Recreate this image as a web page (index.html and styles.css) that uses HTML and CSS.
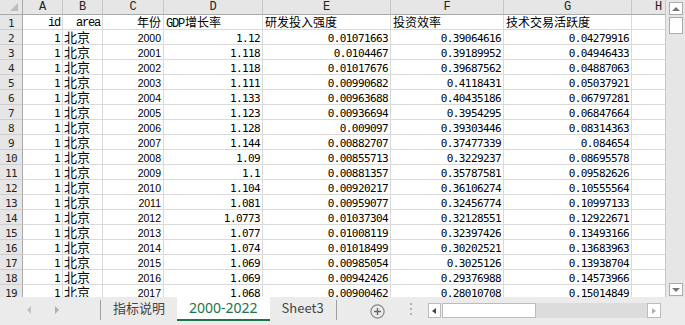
FILE: index.html
```html
<!DOCTYPE html>
<html>
<head>
    <meta charset="utf-8">
    <title>2000-2022</title>
    <link rel="stylesheet" href="styles.css">
</head>
<body>
    <div class="book">
        <div class="main">
            <div class="grid">
                <div class="row head">
                    <div class="corner"><span class="tri"></span></div>
                    <div>A</div>
                    <div>B</div>
                    <div>C</div>
                    <div>D</div>
                    <div>E</div>
                    <div>F</div>
                    <div>G</div>
                    <div>H</div>
                </div>
                <div class="row">
                    <div class="rh">1</div>
                    <div class="r lat">id</div>
                    <div class="r lat">area</div>
                    <div class="r cjk">年份</div>
                    <div class="lat">GDP<span class="cjk-in">增长率</span></div>
                    <div class="cjk">研发投入强度</div>
                    <div class="cjk">投资效率</div>
                    <div class="cjk">技术交易活跃度</div>
                    <div></div>
                </div>
                <div class="row">
                    <div class="rh">2</div>
                    <div class="r">1</div>
                    <div class="city">北京</div>
                    <div class="r year">2000</div>
                    <div class="r">1.12</div>
                    <div class="r">0.01071663</div>
                    <div class="r">0.39064616</div>
                    <div class="r">0.04279916</div>
                    <div></div>
                </div>
                <div class="row">
                    <div class="rh">3</div>
                    <div class="r">1</div>
                    <div class="city">北京</div>
                    <div class="r year">2001</div>
                    <div class="r">1.118</div>
                    <div class="r">0.0104467</div>
                    <div class="r">0.39189952</div>
                    <div class="r">0.04946433</div>
                    <div></div>
                </div>
                <div class="row">
                    <div class="rh">4</div>
                    <div class="r">1</div>
                    <div class="city">北京</div>
                    <div class="r year">2002</div>
                    <div class="r">1.118</div>
                    <div class="r">0.01017676</div>
                    <div class="r">0.39687562</div>
                    <div class="r">0.04887063</div>
                    <div></div>
                </div>
                <div class="row">
                    <div class="rh">5</div>
                    <div class="r">1</div>
                    <div class="city">北京</div>
                    <div class="r year">2003</div>
                    <div class="r">1.111</div>
                    <div class="r">0.00990682</div>
                    <div class="r">0.4118431</div>
                    <div class="r">0.05037921</div>
                    <div></div>
                </div>
                <div class="row">
                    <div class="rh">6</div>
                    <div class="r">1</div>
                    <div class="city">北京</div>
                    <div class="r year">2004</div>
                    <div class="r">1.133</div>
                    <div class="r">0.00963688</div>
                    <div class="r">0.40435186</div>
                    <div class="r">0.06797281</div>
                    <div></div>
                </div>
                <div class="row">
                    <div class="rh">7</div>
                    <div class="r">1</div>
                    <div class="city">北京</div>
                    <div class="r year">2005</div>
                    <div class="r">1.123</div>
                    <div class="r">0.00936694</div>
                    <div class="r">0.3954295</div>
                    <div class="r">0.06847664</div>
                    <div></div>
                </div>
                <div class="row">
                    <div class="rh">8</div>
                    <div class="r">1</div>
                    <div class="city">北京</div>
                    <div class="r year">2006</div>
                    <div class="r">1.128</div>
                    <div class="r">0.009097</div>
                    <div class="r">0.39303446</div>
                    <div class="r">0.08314363</div>
                    <div></div>
                </div>
                <div class="row">
                    <div class="rh">9</div>
                    <div class="r">1</div>
                    <div class="city">北京</div>
                    <div class="r year">2007</div>
                    <div class="r">1.144</div>
                    <div class="r">0.00882707</div>
                    <div class="r">0.37477339</div>
                    <div class="r">0.084654</div>
                    <div></div>
                </div>
                <div class="row">
                    <div class="rh">10</div>
                    <div class="r">1</div>
                    <div class="city">北京</div>
                    <div class="r year">2008</div>
                    <div class="r">1.09</div>
                    <div class="r">0.00855713</div>
                    <div class="r">0.3229237</div>
                    <div class="r">0.08695578</div>
                    <div></div>
                </div>
                <div class="row">
                    <div class="rh">11</div>
                    <div class="r">1</div>
                    <div class="city">北京</div>
                    <div class="r year">2009</div>
                    <div class="r">1.1</div>
                    <div class="r">0.00881357</div>
                    <div class="r">0.35787581</div>
                    <div class="r">0.09582626</div>
                    <div></div>
                </div>
                <div class="row">
                    <div class="rh">12</div>
                    <div class="r">1</div>
                    <div class="city">北京</div>
                    <div class="r year">2010</div>
                    <div class="r">1.104</div>
                    <div class="r">0.00920217</div>
                    <div class="r">0.36106274</div>
                    <div class="r">0.10555564</div>
                    <div></div>
                </div>
                <div class="row">
                    <div class="rh">13</div>
                    <div class="r">1</div>
                    <div class="city">北京</div>
                    <div class="r year">2011</div>
                    <div class="r">1.081</div>
                    <div class="r">0.00959077</div>
                    <div class="r">0.32456774</div>
                    <div class="r">0.10997133</div>
                    <div></div>
                </div>
                <div class="row">
                    <div class="rh">14</div>
                    <div class="r">1</div>
                    <div class="city">北京</div>
                    <div class="r year">2012</div>
                    <div class="r">1.0773</div>
                    <div class="r">0.01037304</div>
                    <div class="r">0.32128551</div>
                    <div class="r">0.12922671</div>
                    <div></div>
                </div>
                <div class="row">
                    <div class="rh">15</div>
                    <div class="r">1</div>
                    <div class="city">北京</div>
                    <div class="r year">2013</div>
                    <div class="r">1.077</div>
                    <div class="r">0.01008119</div>
                    <div class="r">0.32397426</div>
                    <div class="r">0.13493166</div>
                    <div></div>
                </div>
                <div class="row">
                    <div class="rh">16</div>
                    <div class="r">1</div>
                    <div class="city">北京</div>
                    <div class="r year">2014</div>
                    <div class="r">1.074</div>
                    <div class="r">0.01018499</div>
                    <div class="r">0.30202521</div>
                    <div class="r">0.13683963</div>
                    <div></div>
                </div>
                <div class="row">
                    <div class="rh">17</div>
                    <div class="r">1</div>
                    <div class="city">北京</div>
                    <div class="r year">2015</div>
                    <div class="r">1.069</div>
                    <div class="r">0.00985054</div>
                    <div class="r">0.3025126</div>
                    <div class="r">0.13938704</div>
                    <div></div>
                </div>
                <div class="row">
                    <div class="rh">18</div>
                    <div class="r">1</div>
                    <div class="city">北京</div>
                    <div class="r year">2016</div>
                    <div class="r">1.069</div>
                    <div class="r">0.00942426</div>
                    <div class="r">0.29376988</div>
                    <div class="r">0.14573966</div>
                    <div></div>
                </div>
                <div class="row">
                    <div class="rh">19</div>
                    <div class="r">1</div>
                    <div class="city">北京</div>
                    <div class="r year">2017</div>
                    <div class="r">1.068</div>
                    <div class="r">0.00900462</div>
                    <div class="r">0.28010708</div>
                    <div class="r">0.15014849</div>
                    <div></div>
                </div>
            </div>
            <div class="vscroll">
                <div class="vbtn"><span class="arr up"></span></div>
                <div class="vthumb"></div>
                <div class="vbtn down"><span class="arr dn"></span></div>
            </div>
        </div>
        <div class="tabbar">
            <div class="nav">
                <span class="arr lt pale"></span>
                <span class="arr rt pale"></span>
            </div>
            <span class="sep"></span>
            <div class="tab">指标说明</div>
            <div class="tab active">2000-2022</div>
            <div class="tab">Sheet3</div>
            <span class="sep"></span>
            <div class="add">
                <svg width="15" height="15" viewBox="0 0 15 15">
                    <circle cx="7.5" cy="7.5" r="6.6" fill="none" stroke="#858585" stroke-width="1.2"/>
                    <path d="M7.5 4v7M4 7.5h7" stroke="#666" stroke-width="1.4"/>
                </svg>
            </div>
            <div class="dots"><i></i><i></i><i></i></div>
            <div class="hscroll">
                <div class="hbtn"><span class="arr lt"></span></div>
                <div class="hthumb"></div>
                <div class="htrack"></div>
                <div class="hbtn"><span class="arr rt pale"></span></div>
            </div>
        </div>
    </div>
</body>
</html>
```

FILE: styles.css
```css
body {
    margin: 0;
    background: #fff;
}

.book {
    width: 685px;
    height: 325px;
    display: flex;
    flex-direction: column;
    overflow: hidden;
}

.main {
    display: flex;
    height: 297px;
}

.grid {
    width: 665px;
    overflow: hidden;
}

/* one spreadsheet row: row header + columns A..H */
.row {
    display: grid;
    grid-template-columns: 23px 40px 40px 61px 99px 128px 113px 128px 54px;
    height: 15px;
}

.row > div {
    box-sizing: border-box;
    border-right: 1px solid #dadada;
    border-bottom: 1px solid #dadada;
    padding: 0 2px;
    white-space: nowrap;
    overflow: hidden;
    color: #000;
    font: 11px/17px "DejaVu Sans Mono", monospace;
    letter-spacing: -0.6px;
}

.row > .r {
    text-align: right;
}

.row > .lat {
    font: 12px/17px "Liberation Mono", monospace;
    letter-spacing: -1.2px;
}

.row > .cjk,
.cjk-in {
    font: 12px/14px "Noto Sans CJK SC", sans-serif;
    letter-spacing: 0;
}

.cjk-in {
    margin-left: 1px;
}

.row > .city {
    font: 13px/14px "Noto Sans CJK SC", sans-serif;
    letter-spacing: 0;
    padding-left: 1px;
}

.row > .year {
    font: 10.5px/17px "Liberation Sans", sans-serif;
    letter-spacing: 0;
}

/* headings */
.head > div {
    background: #e6e6e6;
    border-right-color: #c6c6c6;
    border-bottom-color: #a9a9a9;
    text-align: center;
    color: #222;
    font: 12px/14px "Liberation Mono", monospace;
    letter-spacing: 0;
}

.head > .corner {
    display: flex;
    justify-content: flex-end;
    align-items: flex-end;
    padding: 0 4px 3px 0;
    border-right-color: #a9a9a9;
}

.tri {
    width: 0;
    height: 0;
    border-left: 8px solid transparent;
    border-bottom: 8px solid #bdbdbd;
}

.row > .rh {
    background: #e6e6e6;
    border-right-color: #a9a9a9;
    border-bottom-color: #cfcfcf;
    text-align: center;
    color: #262626;
}

/* vertical scrollbar */
.vscroll {
    width: 20px;
    box-sizing: border-box;
    border-left: 1px solid #c8c8c8;
    background: #e6e6e6;
    display: flex;
    flex-direction: column;
    align-items: center;
    padding: 2px 0 1px;
}

.vbtn {
    width: 14px;
    height: 13px;
    box-sizing: border-box;
    border: 1px solid #ababab;
    background: #fff;
    display: flex;
    align-items: center;
    justify-content: center;
}

.vbtn.down {
    margin-top: auto;
}

.vthumb {
    width: 14px;
    height: 17px;
    margin-top: 2px;
    box-sizing: border-box;
    border: 1px solid #ababab;
    background: #fff;
}

/* small triangles */
.arr {
    width: 0;
    height: 0;
    display: block;
}

.arr.up {
    border-left: 4px solid transparent;
    border-right: 4px solid transparent;
    border-bottom: 4px solid #777;
}

.arr.dn {
    border-left: 4px solid transparent;
    border-right: 4px solid transparent;
    border-top: 4px solid #777;
}

.arr.lt {
    border-top: 3px solid transparent;
    border-bottom: 3px solid transparent;
    border-right: 4px solid #444;
}

.arr.rt {
    border-top: 3px solid transparent;
    border-bottom: 3px solid transparent;
    border-left: 4px solid #444;
}

.arr.lt.pale {
    border-right-color: #c2c2c2;
}

.arr.rt.pale {
    border-left-color: #b0b0b0;
}

/* sheet tabs */
.tabbar {
    height: 28px;
    display: flex;
    align-items: flex-start;
    background: #ebebeb;
}

.nav {
    width: 100px;
    height: 26px;
    box-sizing: border-box;
    display: flex;
    align-items: center;
    gap: 24px;
    padding-left: 27px;
}

.nav .arr {
    border-top-width: 4px;
    border-bottom-width: 4px;
}

.sep {
    width: 1px;
    height: 20px;
    margin-top: 3px;
    background: #9f9f9f;
}

.tab {
    height: 22px;
    padding: 0 12px;
    color: #444;
    font: 13px/22px "Noto Sans CJK SC", sans-serif;
    white-space: nowrap;
}

.tab.active,
.tab:last-of-type {
    font: 14px/22px "Noto Sans", "Noto Sans CJK SC", sans-serif;
}

.tab.active {
    background: #fff;
    color: #217346;
    border-bottom: 2px solid #217346;
}

.add {
    margin: 7px 0 0 33px;
    height: 15px;
}

.dots {
    width: 2px;
    margin: 6px 0 0 25px;
    display: flex;
    flex-direction: column;
    gap: 3px;
}

.dots i {
    width: 2px;
    height: 2px;
    background: #b4b4b4;
}

/* horizontal scrollbar */
.hscroll {
    width: 233px;
    height: 15px;
    margin: 6px 0 0 16px;
    display: flex;
}

.hbtn {
    width: 13px;
    box-sizing: border-box;
    border: 1px solid #bcbcbc;
    background: #fff;
    display: flex;
    align-items: center;
    justify-content: center;
}

.hthumb {
    width: 94px;
    margin-left: 1px;
    box-sizing: border-box;
    border: 1px solid #bcbcbc;
    background: #fff;
}

.htrack {
    flex: 1;
    background: #dcdcdc;
}

.hbtn:last-child {
    width: 14px;
}
```
